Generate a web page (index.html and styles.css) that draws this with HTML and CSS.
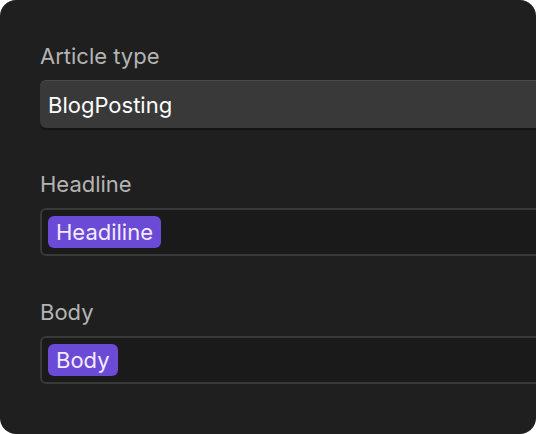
FILE: index.html
```html
<!DOCTYPE html>
<html lang="en">

<head>
    <meta charset="UTF-8">
    <meta name="viewport" content="width=device-width, initial-scale=1.0">
    <title>Article schema</title>
    <link rel="stylesheet" href="styles.css">
</head>

<body>
    <div class="panel">
        <div class="field">
            <label class="field-label">Article type</label>
            <div class="select">BlogPosting</div>
        </div>

        <div class="field">
            <label class="field-label">Headline</label>
            <div class="token-input">
                <span class="token">Headiline</span>
            </div>
        </div>

        <div class="field">
            <label class="field-label">Body</label>
            <div class="token-input">
                <span class="token">Body</span>
            </div>
        </div>
    </div>
</body>

</html>
```

FILE: styles.css
```css
body {
    margin: 0;
    padding: 0;
    background-color: #fff;
    font-family: Inter, "Noto Sans", sans-serif;
}

.panel {
    width: 536px;
    height: 434px;
    box-sizing: border-box;
    padding: 44px 0 0 40px;
    background-color: #1f1f1f;
    border-radius: 16px;
    overflow: hidden;
}

.field {
    margin-bottom: 44px;
}

.field-label {
    display: block;
    font-size: 22px;
    line-height: 24px;
    color: #b4b4b4;
    margin-bottom: 12px;
}

.select {
    width: 560px;
    height: 48px;
    box-sizing: border-box;
    padding: 0 8px;
    display: flex;
    align-items: center;
    font-size: 22px;
    color: #fff;
    background-color: #393939;
    border-top: 1px solid #4a4a4a;
    border-radius: 6px;
    box-shadow: 0 2px 0 #141414;
}

.token-input {
    width: 560px;
    height: 48px;
    box-sizing: border-box;
    padding: 0 6px;
    display: flex;
    align-items: center;
    background-color: #1a1a1a;
    border: 2px solid #383838;
    border-radius: 6px;
}

.token {
    display: inline-block;
    height: 32px;
    line-height: 32px;
    padding: 0 8px;
    font-size: 22px;
    color: #f3ecff;
    background-color: #6b4ad6;
    border-radius: 6px;
}
```
